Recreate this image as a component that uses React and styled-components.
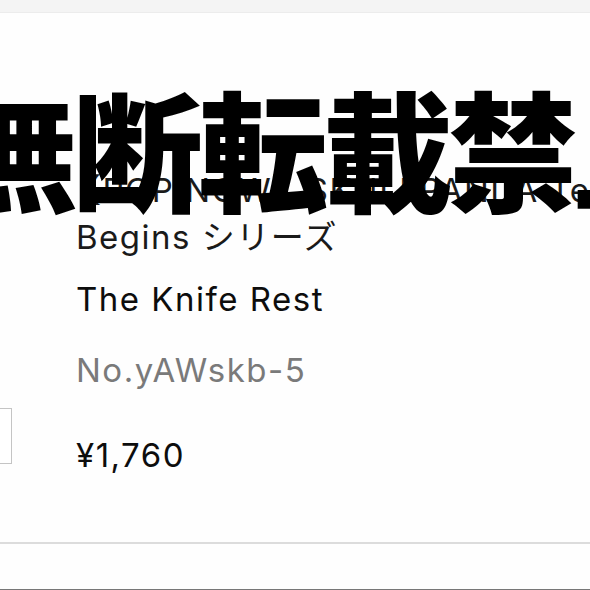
import React from "react";
import styled, { createGlobalStyle } from "styled-components";

const Global = createGlobalStyle`
  html, body { margin: 0; padding: 0; background: #fff; }
  body { width: 590px; height: 590px; overflow: hidden; }
`;

const Page = styled.div`
  position: relative;
  width: 590px;
  height: 590px;
  overflow: hidden;
  display: flex;
  flex-direction: column;
  background: #fefefe;
  font-family: Inter, "Noto Sans CJK JP", sans-serif;
`;

const TopBar = styled.div`
  height: 12px;
  flex: none;
  background: #f4f4f4;
  border-bottom: 1px solid #ececec;
`;

const Main = styled.div`
  flex: 1;
  display: flex;
  min-height: 0;
`;

const LeftCol = styled.div`
  width: 76px;
  flex: none;
  padding-top: 395px;
`;

const Thumb = styled.div`
  width: 60px;
  height: 54px;
  margin-left: -50px;
  border: 1px solid #c4c4c4;
  background: #fff;
`;

const Info = styled.div`
  flex: 1;
  min-width: 0;
  padding-top: 154px;
  display: flex;
  flex-direction: column;
`;

const Title = styled.div`
  font-size: 33px;
  line-height: 47px;
  letter-spacing: 1.5px;
  color: #1a1a1a;
  margin-bottom: 15px;
`;

const TitleLine = styled.div`
  white-space: nowrap;
`;

const Bracket = styled.span`
  margin-left: -8px;
`;

const Text = styled.div`
  font-size: 33px;
  line-height: 47px;
  letter-spacing: 1.5px;
  white-space: nowrap;
  color: ${(p) => p.$color || "#0d0d0d"};
  margin-bottom: ${(p) => p.$mb || 0}px;
`;

const Divider = styled.div`
  height: 2px;
  flex: none;
  background: #dcdcdc;
`;

const Footer = styled.div`
  height: 45px;
  flex: none;
  background: #fefefe;
  border-bottom: 1px solid #777;
`;

const Watermark = styled.div`
  position: absolute;
  left: -52px;
  top: 80px;
  font-family: "Noto Sans CJK JP", sans-serif;
  font-weight: 900;
  font-size: 130px;
  line-height: 1;
  letter-spacing: -5px;
  white-space: nowrap;
  color: #000;
  pointer-events: none;
`;

export default function App() {
  return (
    <>
      <Global />
      <Page>
        <TopBar />
        <Main>
          <LeftCol>
            <Thumb />
          </LeftCol>
          <Info>
            <Title>
              <TitleLine>
                <Bracket>【</Bracket>POP NOW】SKULLPANDA Tell Me What You Want
              </TitleLine>
              <TitleLine>Begins シリーズ</TitleLine>
            </Title>
            <Text $mb={24}>The Knife Rest</Text>
            <Text $color="#7a7a7a" $mb={38}>No.yAWskb-5</Text>
            <Text>¥1,760</Text>
          </Info>
        </Main>
        <Divider />
        <Footer />
        <Watermark>無断転載禁止</Watermark>
      </Page>
    </>
  );
}
